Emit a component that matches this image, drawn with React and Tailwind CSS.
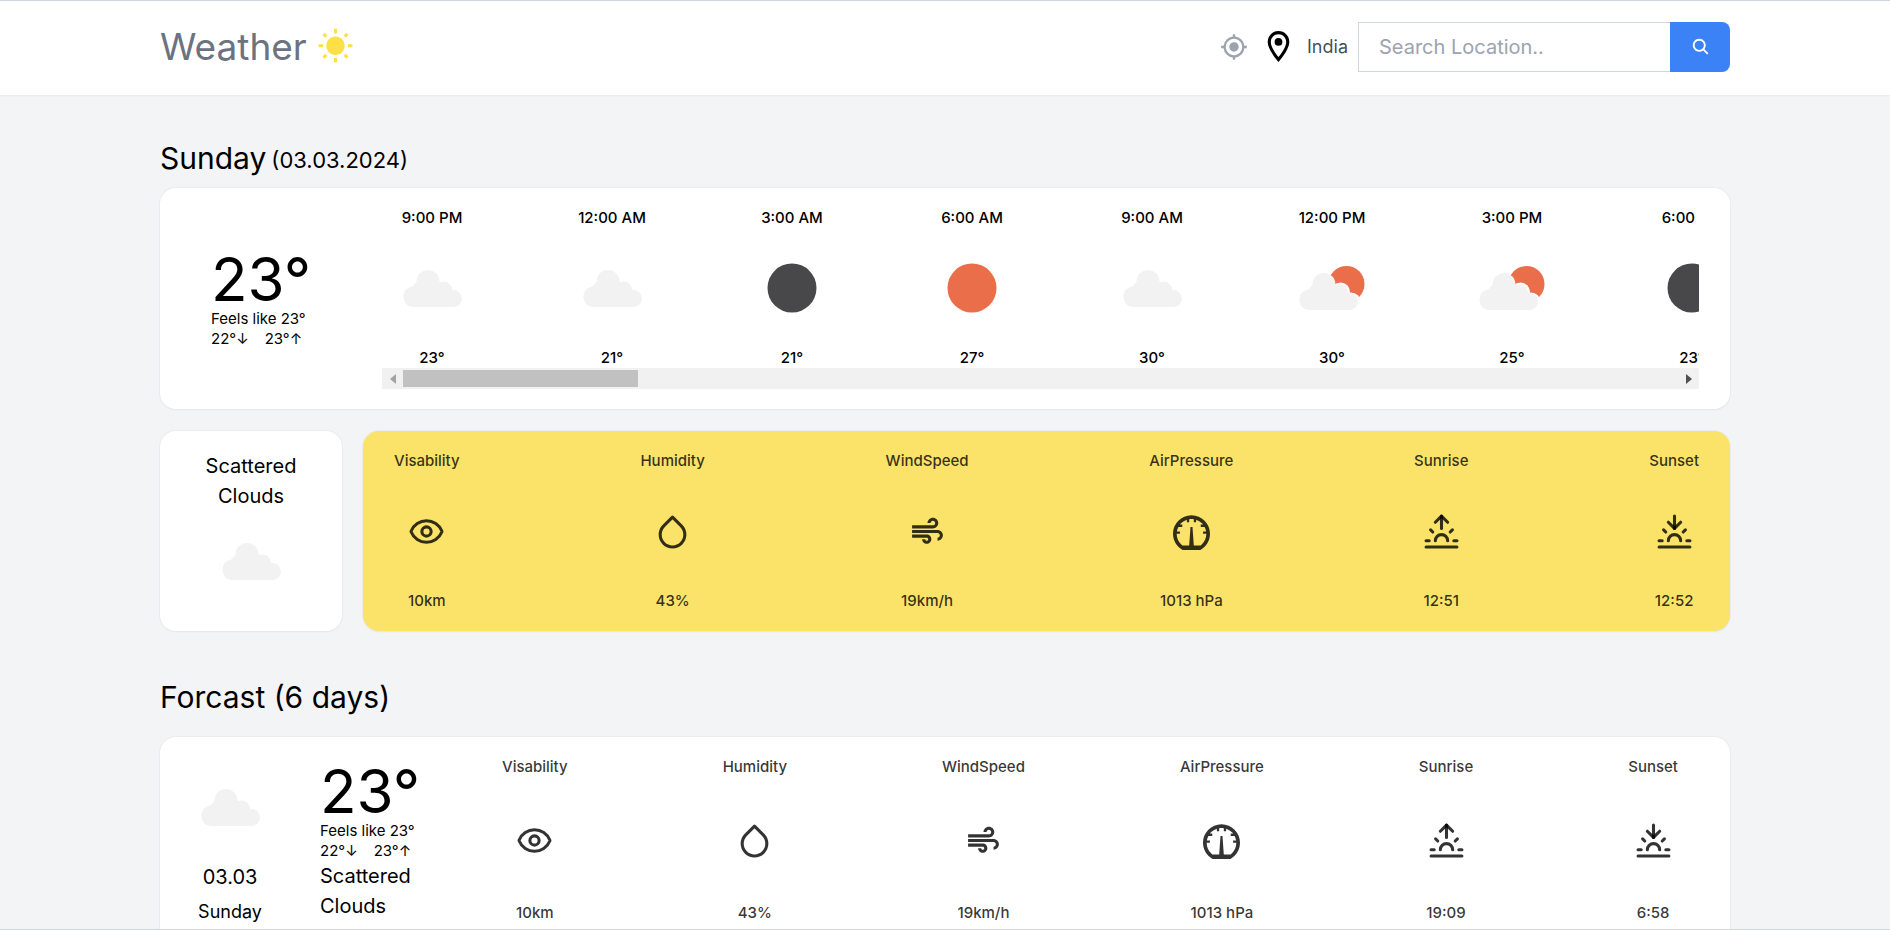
import { MdMyLocation, MdOutlineLocationOn, MdWbSunny, MdAir } from "react-icons/md";
import { IoSearch } from "react-icons/io5";
import { LuEye, LuSunrise, LuSunset } from "react-icons/lu";
import { FiDroplet } from "react-icons/fi";
import { ImMeter } from "react-icons/im";

const HOURS = [
  { time: "9:00 PM", icon: "cloud", temp: 23 },
  { time: "12:00 AM", icon: "cloud", temp: 21 },
  { time: "3:00 AM", icon: "moon", temp: 21 },
  { time: "6:00 AM", icon: "sun", temp: 27 },
  { time: "9:00 AM", icon: "cloud", temp: 30 },
  { time: "12:00 PM", icon: "fewClouds", temp: 30 },
  { time: "3:00 PM", icon: "fewClouds", temp: 25 },
  { time: "6:00 PM", icon: "moon", temp: 23 },
];

function details(sunrise, sunset) {
  return [
    { label: "Visability", icon: LuEye, value: "10km" },
    { label: "Humidity", icon: FiDroplet, value: "43%" },
    { label: "WindSpeed", icon: MdAir, value: "19km/h" },
    { label: "AirPressure", icon: ImMeter, value: "1013 hPa" },
    { label: "Sunrise", icon: LuSunrise, value: sunrise },
    { label: "Sunset", icon: LuSunset, value: sunset },
  ];
}

function CloudShape() {
  return (
    <g fill="#f2f2f2">
      <circle cx="31" cy="58" r="9.5" />
      <circle cx="46" cy="43.5" r="11.5" />
      <circle cx="61.5" cy="52" r="8.5" />
      <circle cx="71.5" cy="60.5" r="8.5" />
      <path d="M21.5 58 L34.5 44 H57 L72 53 V69 H32 Q22 69 21.5 58Z" />
    </g>
  );
}

function WeatherIcon({ name }) {
  return (
    <svg viewBox="0 0 100 100" className="size-[100px] shrink-0" aria-hidden="true">
      {name === "moon" && <circle cx="50" cy="50" r="24.5" fill="#48484a" />}
      {name === "sun" && <circle cx="50" cy="50" r="24.5" fill="#eb6e4b" />}
      {name === "cloud" && <CloudShape />}
      {name === "fewClouds" && (
        <>
          <circle cx="64.5" cy="46" r="18" fill="#eb6e4b" />
          <g transform="translate(-4 3)">
            <circle cx="62.5" cy="51" r="9.5" fill="#ffffff" />
            <circle cx="73" cy="61" r="9.5" fill="#ffffff" />
            <CloudShape />
          </g>
        </>
      )}
    </svg>
  );
}

function Card({ className, children }) {
  return (
    <div className={`flex rounded-2xl shadow-xs ring-1 ring-gray-200/60 ${className}`}>{children}</div>
  );
}

function Temperature() {
  return (
    <>
      <span className="text-[60px] leading-[60px]">23°</span>
      <p className="text-[15px] leading-5 whitespace-nowrap">Feels like 23°</p>
      <p className="flex gap-4 text-[15px] leading-5">
        <span>22°↓</span>
        <span>23°↑</span>
      </p>
    </>
  );
}

function Details({ items }) {
  return items.map(({ label, icon: Icon, value }) => (
    <div
      key={label}
      className="flex flex-col items-center justify-between text-[15px] leading-5 font-medium text-black/80"
    >
      <p>{label}</p>
      <Icon className="size-[37px]" />
      <p>{value}</p>
    </div>
  ));
}

export default function App() {
  return (
    <div className="flex h-screen flex-col border-y border-gray-300 bg-[#f3f4f6] font-['Inter','Noto_Sans',sans-serif] text-black">
      <nav className="shrink-0 bg-white shadow-xs">
        <div className="mx-auto flex h-[94px] w-full max-w-[1610px] items-center justify-between px-5 pb-[3px]">
          <div className="flex items-center gap-[10px]">
            <h1 className="text-[37px] leading-[48px] text-[#6b7280]">Weather</h1>
            <MdWbSunny className="size-[37px] text-[#fde047]" />
          </div>
          <div className="flex items-center">
            <button type="button" aria-label="Use my location" className="mr-3">
              <MdMyLocation className="size-[28px] text-[#9ca3af]" />
            </button>
            <MdOutlineLocationOn className="mr-[10px] size-[37px]" />
            <p className="mr-[10px] text-[18px] leading-6 text-slate-900/80">India</p>
            <form className="flex h-[50px]" onSubmit={(e) => e.preventDefault()}>
              <input
                type="text"
                aria-label="Search location"
                placeholder="Search Location.."
                className="w-[312px] border border-r-0 border-gray-300 px-5 text-[20px] outline-none placeholder:text-[#9ca3af]"
              />
              <button
                type="submit"
                aria-label="Search"
                className="flex w-[60px] items-center justify-center rounded-r-lg bg-[#3b82f6] text-white"
              >
                <IoSearch className="size-[19px]" />
              </button>
            </form>
          </div>
        </div>
      </nav>

      <main className="min-h-0 flex-1 overflow-y-auto [scrollbar-width:none]">
        <div className="mx-auto flex w-full max-w-[1610px] flex-col px-5 pt-[43px] pb-10">
          <section className="flex flex-col">
            <h2 className="mb-[10px] flex items-end gap-[5px] text-[30px] leading-10">
              <span>Sunday</span>
              <span className="text-[22px] leading-9">(03.03.2024)</span>
            </h2>
            <Card className="bg-white px-[31px] py-5">
              <div className="mt-[41px] flex w-[191px] shrink-0 flex-col px-5">
                <Temperature />
              </div>
              <div className="min-w-0 flex-1">
                <div className="flex gap-20 overflow-hidden">
                  {HOURS.map((h) => (
                    <div
                      key={h.time}
                      className="flex w-[100px] shrink-0 flex-col items-center gap-[10px] text-[15px] leading-5 font-medium whitespace-nowrap"
                    >
                      <p>{h.time}</p>
                      <WeatherIcon name={h.icon} />
                      <p>{h.temp}°</p>
                    </div>
                  ))}
                </div>
                <div className="flex h-[21px] items-stretch bg-[#f1f1f1]">
                  <button type="button" aria-label="Scroll left" className="flex w-[21px] items-center justify-center">
                    <svg viewBox="0 0 6 10" className="h-[10px] w-[6px]">
                      <path d="M6 0V10L0 5Z" fill="#a3a3a3" />
                    </svg>
                  </button>
                  <div className="flex flex-1 py-[2px]">
                    <div className="w-[18.4%] bg-[#c1c1c1]" />
                  </div>
                  <button type="button" aria-label="Scroll right" className="flex w-[21px] items-center justify-center">
                    <svg viewBox="0 0 6 10" className="h-[10px] w-[6px]">
                      <path d="M0 0V10L6 5Z" fill="#505050" />
                    </svg>
                  </button>
                </div>
              </div>
            </Card>
            <div className="mt-[22px] flex gap-[21px]">
              <Card className="h-[200px] w-[182px] shrink-0 flex-col items-center bg-white px-5 pt-5">
                <p className="text-center text-[20px] leading-[30px]">Scattered Clouds</p>
                <WeatherIcon name="cloud" />
              </Card>
              <Card className="h-[200px] flex-1 justify-between bg-[#fbe36a] px-[31px] py-5">
                <Details items={details("12:51", "12:52")} />
              </Card>
            </div>
          </section>

          <section className="mt-[46px] flex flex-col gap-5">
            <h2 className="text-[30px] leading-10">Forcast (6 days)</h2>
            <Card className="bg-white pr-[52px] pl-5">
              <div className="flex w-[100px] shrink-0 flex-col items-center pt-5 pb-4">
                <WeatherIcon name="cloud" />
                <p className="text-[20px] leading-10">03.03</p>
                <p className="text-[18px] leading-[30px]">Sunday</p>
              </div>
              <div className="ml-10 flex w-[142px] shrink-0 flex-col pt-6">
                <Temperature />
                <p className="text-[20px] leading-[30px]">Scattered Clouds</p>
              </div>
              <div className="ml-10 flex flex-1 justify-between py-5">
                <Details items={details("19:09", "6:58")} />
              </div>
            </Card>
          </section>
        </div>
      </main>
    </div>
  );
}
